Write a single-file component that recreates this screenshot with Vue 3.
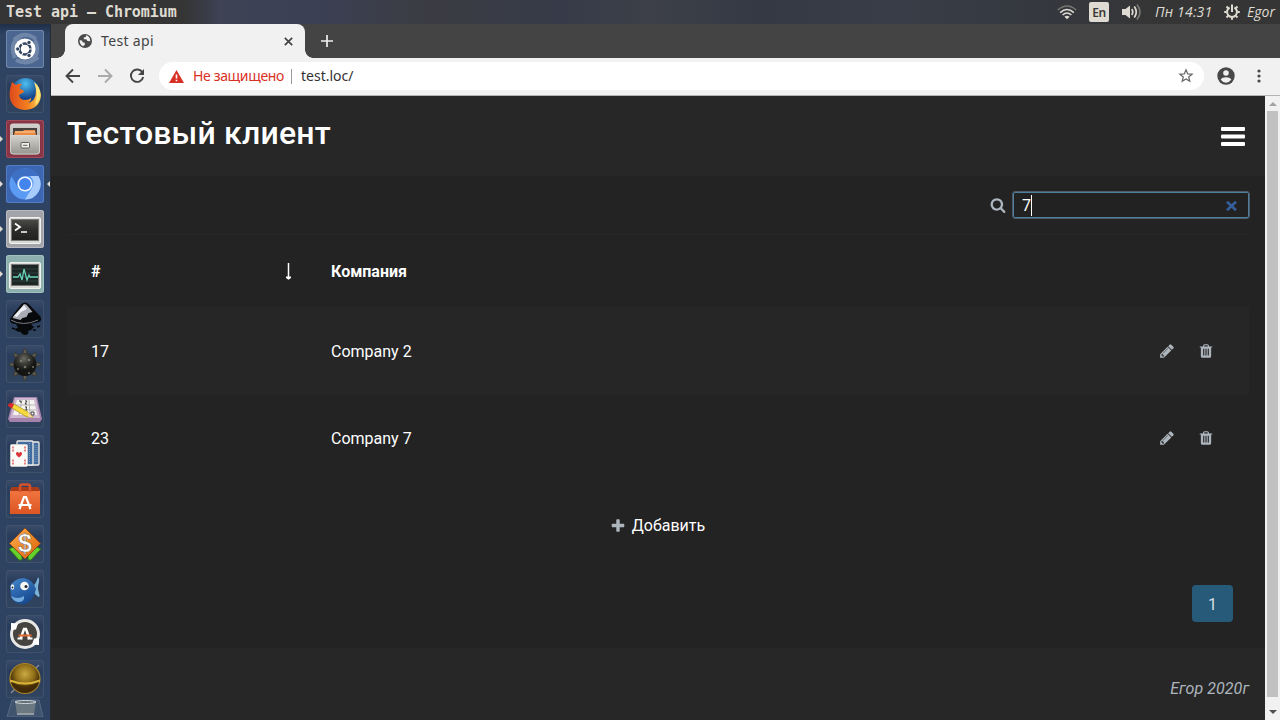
<script setup>
import { ref } from 'vue'

const query = ref('7')
const rows = [
  { id: 17, name: 'Company 2' },
  { id: 23, name: 'Company 7' },
]
const tiles = [
  { name: 'dash', cls: 'dash' },
  { name: 'firefox' },
  { name: 'files', cls: 'files', run: true },
  { name: 'chromium', cls: 'chromium', run: true, active: true },
  { name: 'terminal', cls: 'terminal', run: true },
  { name: 'monitor', cls: 'monitor', run: true },
  { name: 'inkscape' },
  { name: 'mines' },
  { name: 'sudoku' },
  { name: 'cards' },
  { name: 'software' },
  { name: 'money' },
  { name: 'fish' },
  { name: 'updater' },
  { name: 'globe' },
  { name: 'trash', cls: 'folded' },
]
const spikes = [0, 45, 90, 135, 180, 225, 270, 315]
const teeth = [45, 90, 135, 180, 225, 270, 315]
const pencil = 'M491 1536l91-91-235-235-91 91v107h128v128h107zm523-928q0-22-22-22-10 0-17 7l-542 542q-7 7-7 17 0 22 22 22 10 0 17-7l542-542q7-7 7-17zm-54-192l416 416-832 832h-416v-416zm683 96q0 53-37 90l-166 166-416-416 166-165q36-38 90-38 53 0 91 38l235 234q37 39 37 91z'
const bin = 'M704 1376v-704q0-14-9-23t-23-9h-64q-14 0-23 9t-9 23v704q0 14 9 23t23 9h64q14 0 23-9t9-23zm256 0v-704q0-14-9-23t-23-9h-64q-14 0-23 9t-9 23v704q0 14 9 23t23 9h64q14 0 23-9t9-23zm256 0v-704q0-14-9-23t-23-9h-64q-14 0-23 9t-9 23v704q0 14 9 23t23 9h64q14 0 23-9t9-23zm-544-992h448l-48-117q-7-9-17-11h-317q-10 2-17 11zm928 32v64q0 14-9 23t-23 9h-96v948q0 83-47 143.5t-113 60.5h-832q-66 0-113-58.5t-47-141.5v-952h-96q-14 0-23-9t-9-23v-64q0-14 9-23t23-9h309l70-167q15-37 54-63t79-26h320q40 0 79 26t54 63l70 167h309q14 0 23 9t9 23z'
const lens = 'M1216 832q0-185-131.5-316.5t-316.5-131.5-316.5 131.5-131.5 316.5 131.5 316.5 316.5 131.5 316.5-131.5 131.5-316.5zm512 832q0 52-38 90t-90 38q-54 0-90-38l-343-342q-179 124-399 124-143 0-273.5-55.5t-225-150-150-225-55.5-273.5 55.5-273.5 150-225 225-150 273.5-55.5 273.5 55.5 225 150 150 225 55.5 273.5q0 220-124 399l343 343q37 37 37 90z'
const plus = 'M1600 736v192q0 40-28 68t-68 28h-416v416q0 40-28 68t-68 28h-192q-40 0-68-28t-28-68v-416h-416q-40 0-68-28t-28-68v-192q0-40 28-68t68-28h416v-416q0-40 28-68t68-28h192q40 0 68 28t28 68v416h416q40 0 68 28t28 68z'
</script>

<template>
  <div class="desktop">
    <header class="panel">
      <span class="wintitle">Test api – Chromium</span>
      <div class="tray">
        <svg class="wifi" width="20" height="16" viewBox="0 0 20 16" fill="none" stroke="#dfdbd2" stroke-width="1.6">
          <path d="M.8 6Q10-2 19.200 6" stroke="#77766f" />
          <path d="M3.200 8.600Q10 2.400 16.800 8.600M5.600 11Q10 7 14.400 11" />
          <path d="M10 15.200l-2.600-2.500q2.600-1.900 5.200 0z" fill="#dfdbd2" stroke="none" />
        </svg>
        <span class="lang">En</span>
        <svg class="sound" width="20" height="16" viewBox="0 0 20 16">
          <path d="M0 5h3.500L8 1.500v13L3.500 11H0z" fill="#dfdbd2" />
          <g fill="none" stroke="#dfdbd2" stroke-width="1.7">
            <path d="M9.800 5q2 3 0 6M12.300 2.600q4 5.400 0 10.800" />
            <path d="M15 .5q6 7.500 0 15" stroke="#77766f" />
          </g>
        </svg>
        <span class="clock">Пн 14:31</span>
        <svg class="gear" width="16" height="16" viewBox="0 0 16 16">
          <g fill="none" stroke="#dfdbd2" stroke-width="2">
            <path d="M5.600 3.500a5 5 0 1 0 4.800 0" />
            <path d="M8 .5v7.500" />
            <path v-for="t in teeth" :key="t" d="M8 .2v2.300" :transform="`rotate(${t} 8 8)`" />
          </g>
        </svg>
        <span class="user">Egor</span>
      </div>
    </header>

    <div class="work">
      <nav class="launcher">
        <div v-for="t in tiles" :key="t.name" class="tile" :class="t.cls">
          <i v-if="t.run" class="run"></i>
          <i v-if="t.active" class="active"></i>
          <svg v-if="t.name === 'dash'" viewBox="0 0 38 38">
            <g fill="none" stroke="#b7c3d6" opacity=".5">
              <path d="M9 28Q2 12 17 5M29 10q7 16-8 23M8 10Q18 0 30 9M32 27q-10 9-22 3" stroke-width="4" opacity=".7" />
            </g>
            <circle cx="19" cy="19" r="10.500" fill="#fff" />
            <circle cx="19" cy="19" r="5.500" fill="none" stroke="#31435f" stroke-width="2.600" />
            <path d="M19 19L27 19M19 19L15 26M19 19L15 12" stroke="#fff" stroke-width="1.200" />
            <circle cx="19" cy="19" r="4" fill="#fff" />
            <g fill="#31435f" stroke="#fff" stroke-width=".8">
              <circle cx="11.700" cy="19" r="2.100" /><circle cx="23" cy="12.500" r="2.100" /><circle cx="23" cy="25.500" r="2.100" />
            </g>
          </svg>
          <svg v-else-if="t.name === 'firefox'" viewBox="0 0 38 38">
            <defs>
              <radialGradient id="ffBlue" cx=".5" cy=".2"><stop offset="0" stop-color="#4cc0f0" /><stop offset="1" stop-color="#16468e" /></radialGradient>
              <linearGradient id="ffFire" x1="0" x2="1"><stop offset="0" stop-color="#dd4a1d" /><stop offset=".6" stop-color="#f5821f" /><stop offset="1" stop-color="#ffd65a" /></linearGradient>
            </defs>
            <circle cx="19.500" cy="17.500" r="14.500" fill="url(#ffBlue)" />
            <path d="M6 7l4 3q3-2 6-1-3 3-2 5 4 1 4 3l-5 3q1 5 6 5 4 0 6-2 1 3-4 5 9-1 9-12 0-4-1-7 5 3 6 11-1 14-16 15Q4 34 3.500 19 4 12 6 7z" fill="url(#ffFire)" />
            <path d="M28 7q7 5 6 14-1 6-5 9 4-11-1-23z" fill="#ffe477" />
          </svg>
          <svg v-else-if="t.name === 'files'" viewBox="0 0 38 38">
            <defs><linearGradient id="cab" x2="0" y2="1"><stop offset="0" stop-color="#d3d2ce" /><stop offset="1" stop-color="#96958f" /></linearGradient></defs>
            <rect x="4" y="3.500" width="30" height="31" rx="3" fill="url(#cab)" />
            <path d="M7 8h24v7H7z" fill="#46413c" />
            <path d="M8 15l1-4h8l1-1h11l1 5z" fill="#e98b45" />
            <path d="M9 12h20" stroke="#ffcf98" />
            <path d="M4.500 15.500h29v15.500q0 3-3 3H7.500q-3 0-3-3z" fill="url(#cab)" stroke="#dad9d6" stroke-width=".8" />
            <rect x="15" y="22.500" width="8.500" height="5.500" rx="1" fill="#f0efec" stroke="#5e5d59" />
            <path d="M17 25.300h4.500" stroke="#5e5d59" />
          </svg>
          <svg v-else-if="t.name === 'chromium'" viewBox="0 0 38 38">
            <circle cx="19" cy="19" r="15.500" fill="#5b9bf3" />
            <path d="M5.600 11A15.500 15.500 0 0 1 32.400 11H19a8 8 0 0 0-7 12z" fill="#3d6fc4" />
            <path d="M32.400 11A15.500 15.500 0 0 1 19 34.500l7-11.500q4-6-2-12z" fill="#a7cbfb" />
            <circle cx="19" cy="19" r="7.500" fill="#f3f7fe" /><circle cx="19" cy="19" r="6" fill="#4384ee" />
          </svg>
          <svg v-else-if="t.name === 'terminal'" viewBox="0 0 38 38">
            <defs><linearGradient id="scr" x2="0" y2="1"><stop offset="0" stop-color="#4b4b48" /><stop offset=".5" stop-color="#2c2c2a" /><stop offset="1" stop-color="#20201f" /></linearGradient></defs>
            <rect x="3.500" y="7.500" width="31" height="26" rx="1.500" fill="#d9d9d6" stroke="#f1f1ee" />
            <rect x="5.500" y="9.500" width="27" height="21" fill="url(#scr)" stroke="#777" />
            <path d="M9 13.500l5 3.500-5 3.500" fill="none" stroke="#fff" stroke-width="1.800" /><path d="M15 22h6" stroke="#fff" stroke-width="1.500" />
          </svg>
          <svg v-else-if="t.name === 'monitor'" viewBox="0 0 38 38">
            <rect x="3.500" y="7.500" width="31" height="26" rx="1.500" fill="#d9d9d6" stroke="#f1f1ee" />
            <rect x="5.500" y="9.500" width="27" height="21" fill="#1c2725" stroke="#777" />
            <path d="M6 14h26M6 18h26M6 22h26M6 26h26" stroke="#31403d" />
            <path d="M7 22h5l2-3 2 6 2-11 3 11 2-5 1 2h8" fill="none" stroke="#67d3b9" stroke-width="1.300" />
          </svg>
          <svg v-else-if="t.name === 'inkscape'" viewBox="0 0 38 38">
            <path d="M19 2.500q2 0 4 2L34 16q3 4-1 6l-8 2 3 3q-2 3-6 4 2 3-3 4-4-1-4-3-4 0-6-2 0-2 3-2l-2-4q-6 0-6-4 0-2 2-4L15 4.500q2-2 4-2z" fill="#08090b" />
            <path d="M18.500 4q2 0 4 3l4 5-4 1-2 4-4 1-2 2-8-2q0-1 2-3l8-9q1-2 2-2z" fill="#a9acb5" />
            <path d="M18 5l3 4-6 3-4 5-3-1z" fill="#eef0f4" />
            <path d="M5 20q12 7 27 0" stroke="#777b82" fill="none" />
            <path d="M31 27l3-1M27 30h3M6 28l3 1" stroke="#08090b" stroke-width="1.500" />
          </svg>
          <svg v-else-if="t.name === 'mines'" viewBox="0 0 38 38">
            <defs><radialGradient id="mine" cx=".45" cy=".25"><stop offset="0" stop-color="#6d6c65" /><stop offset=".5" stop-color="#393935" /><stop offset="1" stop-color="#151614" /></radialGradient></defs>
            <path v-for="s in spikes" :key="s" d="M16.800 9L18 4h2L21.200 9z" fill="#5e5e56" stroke="#383932" :transform="`rotate(${s} 19 19.500)`" />
            <circle cx="19" cy="19.500" r="11.500" fill="url(#mine)" />
            <g fill="#77766b"><circle cx="15" cy="16" r="1.300" /><circle cx="23" cy="15" r="1.300" /><circle cx="19" cy="22" r="1.300" /><circle cx="27" cy="22" r="1" /><circle cx="12" cy="24" r="1" /><circle cx="23" cy="28" r="1" /></g>
          </svg>
          <svg v-else-if="t.name === 'sudoku'" viewBox="0 0 38 38">
            <path d="M8 7h23l5 22-2 3H4l-2-3z" fill="#a583ac" /><path d="M9 8h21l4 20H4z" fill="#cdb6d0" />
            <path d="M11 10h17l3 15H7z" fill="#f4f2ef" />
            <path d="M10 15h19M9 20h21M16 10l-3 15M23 10l1 15" stroke="#a9a7a6" stroke-width=".8" />
            <path d="M13 11h2v2M19 11h2l-2 3h2M19 17h2l-1 1 1 2h-2M25 22h3v3h-3z" fill="none" stroke="#3e3d40" />
            <path d="M7 13.500l15 8.500 5 5.500-7-1L5 17.500z" fill="#f6d93b" stroke="#a98c18" stroke-width=".7" /><path d="M5 13l3 1.500-2 4L2 16q0-3 3-3z" fill="#d82a30" />
            <path d="M22 22l5 5.500-5-.8z" fill="#f2d6a5" />
          </svg>
          <svg v-else-if="t.name === 'cards'" viewBox="0 0 38 38">
            <g stroke="#ecebe7" stroke-width="1.300"><rect x="17" y="7" width="16" height="23" rx="1" fill="#426b9d" /><rect x="11" y="6" width="16" height="24" rx="1" fill="#426b9d" /></g>
            <path d="M29 10v18M31 10v18M23.500 8v20" stroke="#7898be" stroke-dasharray="1 1" />
            <rect x="4.500" y="9.500" width="17" height="22" rx="1.200" fill="#fafaf7" stroke="#d9d8d4" stroke-width=".7" />
            <path d="M13 22.500q-5-4-2-5.500 1.500 0 2 1.200.5-1.200 2-1.200 3 1.500-2 5.500z" fill="#db3439" />
            <path d="M7 11.500v5M19 11.500v5M7 24.500v5M19 24.500v5" stroke="#ec8386" stroke-width="2" stroke-dasharray="2 1" />
          </svg>
          <svg v-else-if="t.name === 'software'" viewBox="0 0 38 38">
            <defs><linearGradient id="bag" x2="0" y2="1"><stop offset="0" stop-color="#f47a43" /><stop offset="1" stop-color="#dc5523" /></linearGradient></defs>
            <path d="M6 7h26l2 4v23H4V11z" fill="url(#bag)" /><path d="M6 7h26l2 4H4z" fill="#a83a18" />
            <path d="M14 12V7q0-2.500 2-2.500h6q2 0 2 2.500v5" fill="none" stroke="#d5512a" stroke-width="2.500" />
            <path d="M13.500 29L18 17h2l4.500 12M12.500 25h13" fill="none" stroke="#fff" stroke-width="2.200" />
          </svg>
          <svg v-else-if="t.name === 'money'" viewBox="0 0 38 38">
            <path d="M3 24l4-2 9 9v4h-3zM35 24l-4-2-9 9v4h3z" fill="#65cf2d" stroke="#247413" />
            <defs><linearGradient id="dia" x2="1" y2="1"><stop offset="0" stop-color="#ffb34b" /><stop offset="1" stop-color="#dd5d08" /></linearGradient></defs>
            <path d="M19 3l15.500 15.500L19 34 3.500 18.500z" fill="url(#dia)" stroke="#8b481b" />
            <text x="19" y="27" text-anchor="middle" class="dollar">$</text>
          </svg>
          <svg v-else-if="t.name === 'fish'" viewBox="0 0 38 38">
            <defs><linearGradient id="fish" x2=".5" y2="1"><stop offset="0" stop-color="#4687cc" /><stop offset="1" stop-color="#174a91" /></linearGradient></defs>
            <path d="M27 16q3-2 5-9 2 2 1 5-2 6 0 11 1 3 0 4-3-1-6-6z" fill="#7db2d7" />
            <path d="M4 16Q9 8 18 8q9 2 12 11-3 12-11 15-8 1-13-5l-1-4z" fill="url(#fish)" />
            <path d="M5 26q7 4 13 0 1 6-6 6-5-1-7-6z" fill="#73a9dc" />
            <circle cx="18.500" cy="16" r="4.300" fill="#f7f7f4" /><circle cx="20" cy="16.500" r="1.500" fill="#1e2630" /><ellipse cx="6.500" cy="17" rx="1.700" ry="2.800" fill="#f7f7f4" /><circle cx="6.500" cy="17.500" r=".9" fill="#1e2630" />
          </svg>
          <svg v-else-if="t.name === 'updater'" viewBox="0 0 38 38">
            <circle cx="19" cy="19" r="13.500" fill="#464440" stroke="#e8e8e6" stroke-width="3" />
            <path d="M5 8l7 .5-2 6-5 .5zM33 30l-7-.5 2-6 5-.5z" fill="#fff" />
            <path d="M14.500 24l3.500-10h2l3.500 10" fill="none" stroke="#fff" stroke-width="2.500" /><path d="M12.500 20.500h13" stroke="#e26b34" stroke-width="2" /><path d="M11.500 23.500h5M21.500 23.500h5" stroke="#fff" stroke-width="2" />
          </svg>
          <svg v-else-if="t.name === 'globe'" viewBox="0 0 38 38">
            <defs><radialGradient id="brass" cx=".5" cy=".35"><stop offset="0" stop-color="#c9aa43" /><stop offset=".6" stop-color="#927019" /><stop offset="1" stop-color="#463008" /></radialGradient></defs>
            <path d="M5 33L33 5" stroke="#8a8f97" stroke-width="1.200" />
            <circle cx="19" cy="18.500" r="15" fill="url(#brass)" stroke="#a9862a" stroke-width="1.200" />
            <path d="M5 23q14 5 28 0-3 9-14 10Q8 32 5 23z" fill="#3d2807" opacity=".65" />
            <path d="M4 20.500q15 6 30 0" fill="none" stroke="#d9b438" stroke-width="2.200" />
          </svg>
          <svg v-else class="flat" viewBox="0 0 38 18">
            <path d="M6 1h27l4 17H1z" fill="#41546f" stroke="#586a84" />
            <path d="M9 2h21l-2 14H11z" fill="#6b7881" /><ellipse cx="19.500" cy="3" rx="10.500" ry="1.500" fill="#606e79" stroke="#d2d6d8" /><path d="M11 15h17" stroke="#bbc1c3" />
          </svg>
        </div>
      </nav>

      <section class="browser">
        <div class="tabs">
          <div class="tabedge"></div>
          <div class="tab">
            <svg width="14" height="14" viewBox="0 0 14 14">
              <circle cx="7" cy="7" r="7" fill="#4a4a4a" />
              <path d="M8.200 1.200L7.800 3 5.800 3.400v1.800h2.400L9.500 7l2.800.3q.2-3.500-2.300-5.200zM1.600 6.300q-.2 4.200 3.400 5.900l2-1.700-.3-1.700-2-.5-.7-1.800z" fill="#f1f1f1" />
            </svg>
            <span class="tabname">Test api</span>
            <svg width="9" height="9" viewBox="0 0 9 9"><path d="M.8.8l7.400 7.400M8.200.8L.8 8.200" stroke="#444" stroke-width="1.700" /></svg>
          </div>
          <div class="tabedge right"></div>
          <svg class="newtab" width="12" height="12" viewBox="0 0 12 12"><path d="M6 0v12M0 6h12" stroke="#eee" stroke-width="1.700" /></svg>
        </div>
        <div class="toolbar">
          <svg class="nav" width="16" height="16" viewBox="0 0 16 16" fill="none" stroke="#454545" stroke-width="1.900"><path d="M15 8H2M8 1.500L1.500 8 8 14.500" /></svg>
          <svg class="nav" width="16" height="16" viewBox="0 0 16 16" fill="none" stroke="#aaa" stroke-width="1.900"><path d="M1 8h13M8 1.500L14.500 8 8 14.500" /></svg>
          <svg class="nav" width="16" height="16" viewBox="0 0 16 16"><path d="M13.500 4.500A6.200 6.200 0 1 0 14.200 9" fill="none" stroke="#454545" stroke-width="1.900" /><path d="M15 1v6H9z" fill="#454545" /></svg>
          <div class="omnibox">
            <svg width="15" height="13" viewBox="0 0 15 13"><path d="M7.500 0L15 13H0z" fill="#d93025" /><path d="M7.500 4.500v4M7.500 9.800v1.500" stroke="#fff" stroke-width="1.600" /></svg>
            <span class="warn">Не защищено</span>
            <span class="sep"></span>
            <span class="url">test.loc/</span>
            <svg class="star" width="16" height="16" viewBox="0 0 16 16"><path d="M8 1.800l1.700 4.100 4.400.3-3.400 2.800 1.100 4.300L8 11l-3.800 2.300L5.300 9 1.900 6.200l4.400-.3z" fill="none" stroke="#666" stroke-width="1.200" /></svg>
          </div>
          <svg class="avatar" width="18" height="18" viewBox="0 0 18 18"><circle cx="9" cy="9" r="8.700" fill="#484848" /><circle cx="9" cy="6" r="2.800" fill="#f1f1f1" /><path d="M3.600 12.500Q5 10.300 9 10.300t5.400 2.200Q12 15.800 9 15.800t-5.400-3.300z" fill="#f1f1f1" /></svg>
          <svg class="dots" width="4" height="14" viewBox="0 0 4 14" fill="#484848"><circle cx="2" cy="2" r="1.600" /><circle cx="2" cy="7" r="1.600" /><circle cx="2" cy="12" r="1.600" /></svg>
        </div>

        <div class="viewport">
          <div class="page">
            <div class="head">
              <h1>Тестовый клиент</h1>
              <svg width="24" height="20" viewBox="0 0 24 20" fill="#fff"><rect y="0" width="24" height="4" rx="1" /><rect y="7.500" width="24" height="4" rx="1" /><rect y="15" width="24" height="4" rx="1" /></svg>
            </div>
            <main>
              <div class="searchrow">
                <svg width="16" height="16" viewBox="0 0 1792 1792"><path :d="lens" fill="#adb5bd" /></svg>
                <div class="field">
                  <span class="value">{{ query }}</span><span class="caret"></span>
                  <svg width="11" height="10" viewBox="0 0 11 10"><path d="M1 .8l9 8.400M10 .8L1 9.200" stroke="#365f9e" stroke-width="2.700" /></svg>
                </div>
              </div>
              <div class="row th">
                <div class="num">#
                  <svg width="7" height="17" viewBox="0 0 7 17"><path d="M3.500 0v15" stroke="#fff" stroke-width="1.500" /><path d="M1 13.500h5v1.500l-2.500 1.800L1 15z" fill="#fff" /></svg>
                </div>
                <div class="name">Компания</div>
              </div>
              <div v-for="r in rows" :key="r.id" class="row">
                <div class="num">{{ r.id }}</div>
                <div class="name">{{ r.name }}</div>
                <div class="acts">
                  <svg width="16" height="16" viewBox="0 0 1792 1792"><path :d="pencil" fill="#adb5bd" /></svg>
                  <svg width="16" height="16" viewBox="0 0 1792 1792"><path :d="bin" fill="#adb5bd" /></svg>
                </div>
              </div>
              <div class="add">
                <svg width="16" height="16" viewBox="0 0 1792 1792"><path :d="plus" fill="#adb5bd" /></svg>
                <span>Добавить</span>
              </div>
              <div class="pager"><span>1</span></div>
            </main>
            <footer>Егор 2020г</footer>
          </div>
          <div class="scroll">
            <i class="up"></i>
            <div class="thumb"></div>
            <i class="down"></i>
          </div>
        </div>
      </section>
    </div>
  </div>
</template>

<style>
body { background: #222; overflow: hidden; }
</style>
<style scoped>
* { box-sizing: border-box; }
svg { display: block; flex: none; }
.desktop { width: 1280px; height: 720px; display: flex; flex-direction: column; overflow: hidden; font-family: Roboto, sans-serif; font-size: 16px; color: #fff; }
.panel { height: 24px; flex: none; display: flex; align-items: center; justify-content: space-between; padding: 0 4px 0 6px; background: linear-gradient(90deg, #353535 0, #353535 185px, #3d4254 220px, #3b4055 310px, #3b3c42 430px, #363b49 560px, #3d4048 650px, #343944 760px, #393d47 900px, #35383f 1040px, #353535 1160px); }
.wintitle { font: bold 15px/24px "DejaVu Sans Mono", monospace; letter-spacing: -.04px; color: #dfdbd2; }
.tray { display: flex; align-items: center; height: 24px; font: italic 14px/24px "Open Sans", sans-serif; color: #dfdbd2; }
.lang { width: 20px; height: 20px; margin: 0 13px 0 12px; background: #dfdbd2; border-radius: 2px; color: #3a3935; font: 600 12px/21px "Noto Sans", sans-serif; text-align: center; letter-spacing: -.4px; }
.clock { width: 58px; margin-left: 13px; white-space: nowrap; letter-spacing: .2px; }
.gear { margin: 0 7px 0 11px; }
.user { width: 29px; white-space: nowrap; }
.work { flex: 1; display: flex; min-height: 0; }
.launcher { width: 51px; flex: none; padding: 6px 0 0 6px; display: flex; flex-direction: column; gap: 7px; background: linear-gradient(180deg, #1f2e48 0, #2e4261 10px, #2e4261 100%); border-right: 1px solid #252a33; }
.tile { position: relative; width: 38px; height: 38px; flex: none; border-radius: 3px; background: linear-gradient(180deg, #3a4c6a, #293c5b 30%, #31445f); box-shadow: inset 0 0 0 1px #40516c; }
.tile svg { width: 38px; height: 38px; }
.tile.dash { background: #4b6690; box-shadow: inset 0 0 0 1px #7188ab; }
.tile.files { background: #8a3546; box-shadow: inset 0 0 0 1px #a04c59; }
.tile.chromium { background: #3d66b2; box-shadow: inset 0 0 0 1px #557dc4; }
.tile.terminal { background: #a2a4aa; box-shadow: inset 0 0 0 1px #b9bbc0; }
.tile.monitor { background: #8db0af; box-shadow: inset 0 0 0 1px #a1c1be; }
.tile.folded { height: 18px; margin-top: -6px; background: none; box-shadow: none; }
.tile svg.flat { height: 18px; }
.run, .active { position: absolute; top: 16px; border: 3px solid transparent; }
.run { left: -6px; border-left-color: #dfdbd2; border-right: 0; }
.active { right: -6px; border-right-color: #dfdbd2; border-left: 0; }
.dollar { font: bold 25px "Liberation Sans", sans-serif; fill: #fff; stroke: #6d675e; stroke-width: .5px; }
.browser { flex: 1; display: flex; flex-direction: column; min-width: 0; font-family: Roboto, sans-serif; }
.tabs { height: 34px; flex: none; display: flex; align-items: stretch; background: #444; }
.tabedge { width: 14px; background: radial-gradient(circle at 0 0, transparent 7.500px, #f1f1f1 8px) right bottom / 8px 8px no-repeat; }
.tabedge.right { background: radial-gradient(circle at 100% 0, transparent 7.500px, #f1f1f1 8px) left bottom / 8px 8px no-repeat; }
.tab { width: 240px; display: flex; align-items: center; padding: 0 12px 0 13px; background: #f1f1f1; border-radius: 8px 8px 0 0; color: #444; }
.tabname { flex: 1; margin-left: 9px; font: 14px/20px "Noto Sans", sans-serif; letter-spacing: .35px; }
.newtab { margin: 11px 0 0 2px; }
.toolbar { height: 38px; flex: none; display: flex; align-items: center; padding: 0 19px 0 14px; background: #f1f1f1; border-bottom: 1px solid #b4b4b4; color: #333; }
.toolbar > svg, .omnibox { margin-bottom: 1px; }
.nav { margin-right: 16px; }
.nav:nth-child(3) { margin-right: 14px; }
.omnibox { flex: 1; max-width: 1045px; height: 28px; display: flex; align-items: center; padding: 0 10px; border-radius: 14px; background: #fff; font: 14px/28px "Noto Sans", sans-serif; }
.warn { width: 91px; margin-left: 9px; color: #d93025; white-space: nowrap; letter-spacing: -.35px; }
.sep { width: 1px; height: 15px; margin: 0 9px 0 7px; background: #999; }
.url { flex: 1; }
.avatar { margin-left: 13px; }
.dots { margin-left: auto; }
.viewport { flex: 1; display: flex; min-height: 0; }
.page { flex: 1; background: #232323; }
.head { height: 80px; display: flex; justify-content: space-between; padding: 18px 20px 0 16px; background: #272727; }
.head svg { margin-top: 13px; }
h1 { margin: 0; font-size: 32px; line-height: 38px; font-weight: 500; letter-spacing: .18px; }
main { height: 472px; padding: 0 16px; background: #232323; }
.searchrow { height: 59px; display: flex; justify-content: flex-end; align-items: center; border-bottom: 1px solid #272727; gap: 6px; }
.field { width: 238px; height: 28px; margin-right: -1px; display: flex; align-items: center; padding: 0 12px 0 8px; border: 1px solid #4f5b69; box-shadow: inset 0 0 0 1px #4f7f9f; border-radius: 3px; background: #222; }
.value { margin-left: 1px; }
.caret { width: 1px; height: 21px; background: #fff; margin-right: auto; }
.field svg { margin-top: 2px; }
.row { height: 88px; display: flex; align-items: center; padding: 0 35px 0 24px; }
.row.th { height: 72px; font-weight: 700; }
.th + .row { background: #262626; }
.th + .row + .row { height: 86px; }
.num { width: 240px; display: flex; justify-content: space-between; align-items: center; padding-right: 39px; }
.name { flex: 1; }
.acts { display: flex; gap: 23px; }
.add { height: 88px; display: flex; align-items: center; justify-content: center; gap: 6px; padding-right: 1px; border-top: 1px solid #252525; }
.pager { display: flex; justify-content: flex-end; padding: 16px 16px 0; }
.pager span { width: 41px; height: 37px; border-radius: 4px; background: #265a78; color: #d3dee4; text-align: center; line-height: 39px; }
footer { height: 76px; padding: 31px 16px 0; text-align: right; line-height: 20px; font-style: italic; letter-spacing: .08px; color: #adb5bd; background: #272727; }
.scroll { width: 15px; display: flex; flex-direction: column; align-items: center; background: #f1f1f1; }
.up, .down { height: 0; width: 0; border: 4px solid transparent; }
.up { margin-top: 6px; border-top: 0; border-bottom-color: #a3a3a3; }
.down { margin: 13px 0 6px; border-bottom: 0; border-top-color: #505050; }
.thumb { width: 11px; flex: 1; margin-top: 5px; background: #c1c1c1; }
</style>
